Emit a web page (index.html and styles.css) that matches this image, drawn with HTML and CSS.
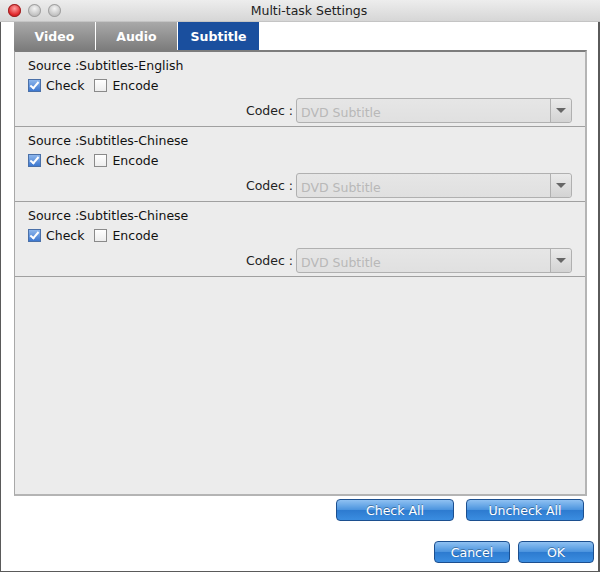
FILE: index.html
```html
<!DOCTYPE html>
<html lang="en">
<head>
    <meta charset="UTF-8">
    <title>Multi-task Settings</title>
    <link rel="stylesheet" href="styles.css">
</head>
<body>

    <div class="window">
        <div class="titlebar">
            <div class="lights">
                <span class="light close"></span>
                <span class="light"></span>
                <span class="light"></span>
            </div>
            <div class="title">Multi-task Settings</div>
        </div>

        <div class="content">
            <div class="tabs">
                <div class="tab">Video</div>
                <div class="tab">Audio</div>
                <div class="tab active">Subtitle</div>
            </div>

            <div class="panel">
                <div class="track">
                    <div class="source">Source :Subtitles-English</div>
                    <div class="checks">
                        <label class="check"><span class="box checked"></span>Check</label>
                        <label class="check"><span class="box"></span>Encode</label>
                    </div>
                    <div class="codec-row">
                        <span class="codec-label">Codec :</span>
                        <div class="select">
                            <span class="select-value">DVD Subtitle</span>
                            <span class="select-arrow"></span>
                        </div>
                    </div>
                </div>
                <div class="track">
                    <div class="source">Source :Subtitles-Chinese</div>
                    <div class="checks">
                        <label class="check"><span class="box checked"></span>Check</label>
                        <label class="check"><span class="box"></span>Encode</label>
                    </div>
                    <div class="codec-row">
                        <span class="codec-label">Codec :</span>
                        <div class="select">
                            <span class="select-value">DVD Subtitle</span>
                            <span class="select-arrow"></span>
                        </div>
                    </div>
                </div>
                <div class="track">
                    <div class="source">Source :Subtitles-Chinese</div>
                    <div class="checks">
                        <label class="check"><span class="box checked"></span>Check</label>
                        <label class="check"><span class="box"></span>Encode</label>
                    </div>
                    <div class="codec-row">
                        <span class="codec-label">Codec :</span>
                        <div class="select">
                            <span class="select-value">DVD Subtitle</span>
                            <span class="select-arrow"></span>
                        </div>
                    </div>
                </div>
            </div>

            <div class="button-row">
                <button class="mac-button wide">Check All</button>
                <button class="mac-button wide">Uncheck All</button>
            </div>
            <div class="button-row footer">
                <button class="mac-button">Cancel</button>
                <button class="mac-button">OK</button>
            </div>
        </div>
    </div>

</body>
</html>
```

FILE: styles.css
```css
body {
    margin: 0;
    padding: 0;
    font-family: "DejaVu Sans", "Liberation Sans", sans-serif;
    font-size: 12.5px;
    color: #111;
    background-color: #fff;
}

.window {
    width: 600px;
    height: 572px;
    box-sizing: border-box;
    border-left: 1px solid #5a5a5a;
    border-right: 2px solid #5a5a5a;
    border-bottom: 1px solid #5a5a5a;
    display: flex;
    flex-direction: column;
    background-color: #fff;
}

.titlebar {
    height: 22px;
    flex-shrink: 0;
    position: relative;
    background: linear-gradient(#ededed, #d6d6d6);
    border-bottom: 1px solid #c4c4c4;
    box-sizing: border-box;
    display: flex;
    align-items: center;
    justify-content: center;
    margin-left: -1px;
    margin-right: -2px;
    padding-left: 18px;
}

.lights {
    position: absolute;
    left: 8px;
    top: 4px;
    display: flex;
    gap: 7px;
}

.light {
    width: 13px;
    height: 13px;
    border-radius: 50%;
    background: radial-gradient(circle at 50% 35%, #f4f4f4, #bcbcbc 70%, #9e9e9e);
    box-shadow: inset 0 0 0 1px #a0a0a0;
}

.light.close {
    background: radial-gradient(circle at 50% 35%, #ffa0a0, #e0262a 60%, #a01010);
    box-shadow: inset 0 0 0 1px #9a2424;
}

.title {
    font-size: 12.5px;
    color: #222;
}

.content {
    flex: 1;
    padding: 0 11px 0 13px;
    display: flex;
    flex-direction: column;
}

.tabs {
    display: flex;
    height: 28px;
    flex-shrink: 0;
}

.tab {
    width: 81px;
    margin-right: 1px;
    background: linear-gradient(#a9a9a9, #7c7c7c);
    color: #fff;
    font-weight: bold;
    font-size: 12.5px;
    display: flex;
    align-items: center;
    justify-content: center;
}

.tab.active {
    background: #1a4f9e;
}

.panel {
    height: 446px;
    box-sizing: border-box;
    background-color: #ececec;
    border-top: 2px solid #7d7d7d;
    border-left: 1px solid #a8a8a8;
    border-right: 2px solid #b4b4b4;
    border-bottom: 2px solid #b4b4b4;
}

.track {
    height: 75px;
    box-sizing: border-box;
    border-bottom: 1px solid #a0a0a0;
    padding: 5px 13px 0 13px;
}

.source {
    height: 17px;
    line-height: 17px;
}

.checks {
    display: flex;
    gap: 10px;
    margin-top: 3px;
    height: 17px;
    align-items: center;
}

.check {
    display: flex;
    align-items: center;
    gap: 5px;
}

.box {
    width: 11px;
    height: 11px;
    border: 1px solid #8a8a8a;
    background: linear-gradient(#fff, #ededed);
    position: relative;
}

.box.checked {
    background: linear-gradient(#8db6ec, #3d78d0);
    border-color: #4a70a8;
}

.box.checked::after {
    content: "";
    position: absolute;
    left: 3px;
    top: 0px;
    width: 3px;
    height: 7px;
    border-right: 2px solid #fff;
    border-bottom: 2px solid #fff;
    transform: rotate(40deg);
}

.codec-row {
    display: flex;
    justify-content: flex-end;
    align-items: center;
    gap: 3px;
    margin-top: 4px;
}

.codec-label {
    color: #222;
}

.select {
    width: 276px;
    height: 25px;
    box-sizing: border-box;
    border: 1px solid #b0b0b0;
    border-radius: 3px;
    background: linear-gradient(#e6e6e6, #e0e0e0);
    display: flex;
    align-items: center;
}

.select-value {
    flex: 1;
    padding-left: 4px;
    color: #b8b8b8;
    padding-top: 3px;
}

.select-arrow {
    width: 20px;
    height: 100%;
    border-left: 1px solid #b0b0b0;
    background: linear-gradient(#eaeaea, #d3d3d3);
    position: relative;
    border-radius: 0 3px 3px 0;
}

.select-arrow::after {
    content: "";
    position: absolute;
    left: 5px;
    top: 9px;
    border-left: 5px solid transparent;
    border-right: 5px solid transparent;
    border-top: 5px solid #666;
}

.button-row {
    display: flex;
    justify-content: flex-end;
    gap: 12px;
    margin-top: 3px;
    padding-right: 3px;
}

.button-row.footer {
    gap: 8px;
    margin-top: 20px;
    padding-right: 0;
    margin-right: -7px;
}

.mac-button {
    font-family: "DejaVu Sans", "Liberation Sans", sans-serif;
    font-size: 12.5px;
    color: #fff;
    width: 76px;
    height: 22px;
    padding: 0;
    border: 1px solid #1c4f8f;
    border-radius: 4px;
    background: linear-gradient(#8fc1f2 0%, #4a93de 50%, #2d7bd0 52%, #3b8de0 100%);
    text-shadow: 0 -1px 0 rgba(0, 0, 0, 0.3);
    cursor: pointer;
}

.mac-button.wide {
    width: 118px;
}
```
